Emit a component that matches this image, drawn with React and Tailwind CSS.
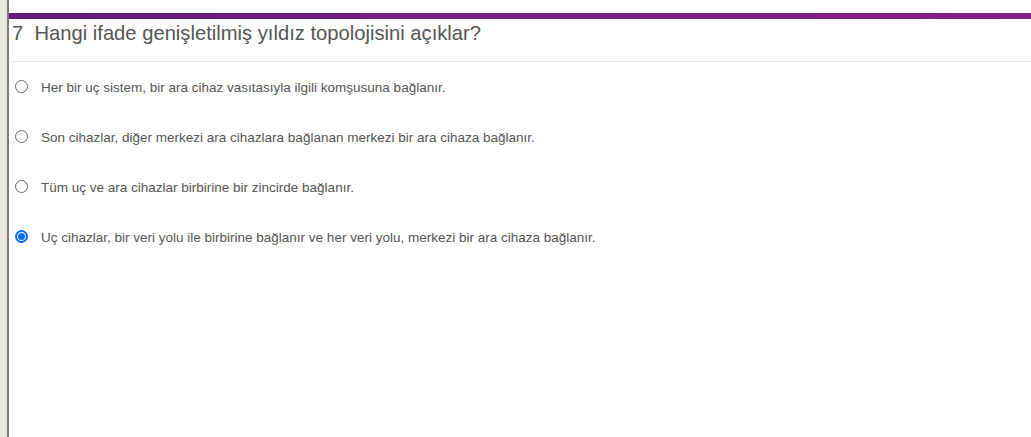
import React from "react";

const options = [
  "Her bir uç sistem, bir ara cihaz vasıtasıyla ilgili komşusuna bağlanır.",
  "Son cihazlar, diğer merkezi ara cihazlara bağlanan merkezi bir ara cihaza bağlanır.",
  "Tüm uç ve ara cihazlar birbirine bir zincirde bağlanır.",
  "Uç cihazlar, bir veri yolu ile birbirine bağlanır ve her veri yolu, merkezi bir ara cihaza bağlanır.",
];

function Radio({ checked }) {
  if (checked) {
    return (
      <span className="w-[13px] h-[13px] rounded-full border-[2px] border-[#0a6cff] bg-white flex items-center justify-center shrink-0">
        <span className="w-[7px] h-[7px] rounded-full bg-[#0a6cff]" />
      </span>
    );
  }
  return (
    <span className="w-[13px] h-[13px] rounded-full border border-[#6b6b6b] bg-white shrink-0" />
  );
}

export default function App() {
  return (
    <div
      className="flex w-[1031px] h-[437px] bg-white overflow-hidden"
      style={{ fontFamily: '"Liberation Sans", Arial, sans-serif' }}
    >
      <div className="w-[7px] h-full bg-[#ebe8e1] shrink-0" />
      <div className="w-[2px] h-full bg-[#7d7b78] shrink-0" />
      <div className="flex-1 flex flex-col pt-[13px]">
        <div className="h-[6px] bg-gradient-to-r from-[#661a79] to-[#8a1f8f]" />
        <div className="pl-[3px] mt-[3px] text-[20.2px] leading-[23px] text-[#555555]">
          7&nbsp; Hangi ifade genişletilmiş yıldız topolojisini açıklar?
        </div>
        <div className="ml-[2px] mt-[16px] h-px bg-[#e8e8e8]" />
        <div className="flex flex-col mt-[-1px]">
          {options.map((o, i) => (
            <div key={i} className="h-[50px] flex items-start pt-[19px] pl-[6px]">
              <Radio checked={i === 3} />
              <span className="ml-[13px] text-[13.5px] leading-[16px] text-[#555555]">{o}</span>
            </div>
          ))}
        </div>
      </div>
    </div>
  );
}
